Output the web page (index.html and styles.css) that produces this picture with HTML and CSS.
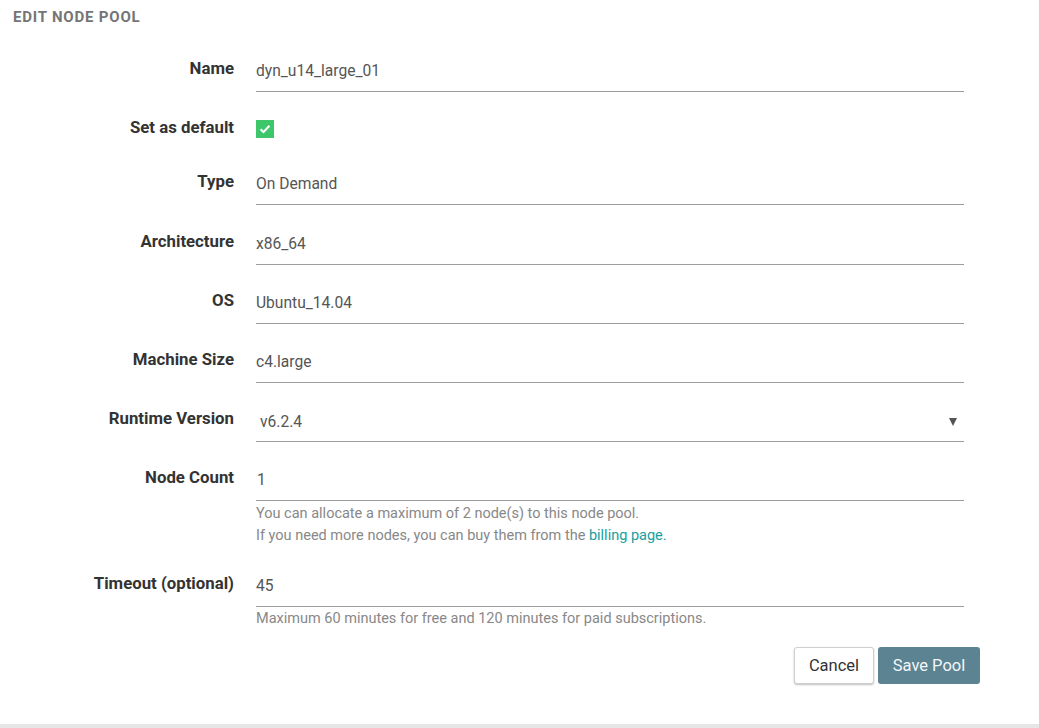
FILE: index.html
```html
<!DOCTYPE html>
<html>
<head>
<meta charset="utf-8">
<link rel="stylesheet" href="styles.css">
</head>
<body>
<div class="panel">
  <h1 class="title">Edit Node Pool</h1>
  <form class="form">
    <label class="label">Name</label>
    <div class="field"><div class="input">dyn_u14_large_01</div></div>

    <label class="label label-check">Set as default</label>
    <div class="field check-row">
      <span class="checkbox"><svg width="12" height="10" viewBox="0 0 12 10"><path d="M1.5 5.2 L4.5 8 L10.5 1.8" fill="none" stroke="#fff" stroke-width="2"/></svg></span>
    </div>

    <label class="label">Type</label>
    <div class="field"><div class="input">On Demand</div></div>

    <label class="label">Architecture</label>
    <div class="field"><div class="input">x86_64</div></div>

    <label class="label">OS</label>
    <div class="field"><div class="input">Ubuntu_14.04</div></div>

    <label class="label">Machine Size</label>
    <div class="field"><div class="input">c4.large</div></div>

    <label class="label">Runtime Version</label>
    <div class="field"><div class="input select"><span class="sel-val">v6.2.4</span><span class="caret"></span></div></div>

    <label class="label">Node Count</label>
    <div class="field">
      <div class="input num">1</div>
      <p class="help">You can allocate a maximum of 2 node(s) to this node pool.<br>If you need more nodes, you can buy them from the <a class="link" href="#">billing page.</a></p>
    </div>

    <label class="label">Timeout (optional)</label>
    <div class="field">
      <div class="input">45</div>
      <p class="help help-last">Maximum 60 minutes for free and 120 minutes for paid subscriptions.</p>
    </div>
  </form>
  <div class="actions">
    <button class="btn btn-cancel" type="button">Cancel</button>
    <button class="btn btn-save" type="button">Save Pool</button>
  </div>
</div>
</body>
</html>
```

FILE: styles.css
```css
html, body {
  margin: 0;
  padding: 0;
  background: #e6e6e6;
}
body {
  font-family: Roboto, "Liberation Sans", sans-serif;
  color: #333;
}
.panel {
  background: #fff;
  height: 724px;
  box-sizing: border-box;
}
.title {
  margin: 0;
  padding: 9px 13px 0;
  font-size: 15px;
  line-height: 16px;
  font-weight: 700;
  text-transform: uppercase;
  color: #757575;
  letter-spacing: 0.8px;
}
.form {
  display: grid;
  grid-template-columns: 234px 708px;
  column-gap: 22px;
  row-gap: 19.2px;
  margin-top: 27px;
  align-items: start;
}
.label {
  text-align: right;
  font-size: 16.8px;
  font-weight: 700;
  line-height: 20px;
  color: #333;
  padding-top: 6px;
}
.field {
  min-width: 0;
}
.input {
  box-sizing: border-box;
  height: 40px;
  padding: 1px 0 1px 0;
  border-bottom: 1px solid #9a9e9e;
  font-size: 15.6px;
  line-height: 37px;
  color: #555;
}
.input.num {
  padding-left: 1px;
}
.select {
  display: flex;
  justify-content: space-between;
  align-items: center;
  padding-left: 4px;
  padding-right: 7px;
  line-height: normal;
}
.caret {
  width: 0;
  height: 0;
  border-left: 4px solid transparent;
  border-right: 4px solid transparent;
  border-top: 8px solid #555;
}
.check-row {
  height: 35px;
  display: flex;
  align-items: center;
}
.checkbox {
  width: 18px;
  height: 18px;
  background: #3ec66a;
  display: flex;
  align-items: center;
  justify-content: center;
}
.help {
  margin: 2px 0 0;
  font-size: 14.5px;
  line-height: 22px;
  color: #888;
}
.help-last {
  margin-top: 1px;
}
.link {
  color: #169e9e;
  text-decoration: none;
}
.actions {
  display: flex;
  justify-content: flex-end;
  gap: 4px;
  width: 980px;
  margin-top: 17px;
}
.btn {
  font-family: Roboto, "Liberation Sans", sans-serif;
  font-size: 16.5px;
  height: 37px;
  border-radius: 3px;
  padding: 0;
  white-space: nowrap;
  cursor: pointer;
}
.btn-cancel {
  width: 80px;
  background: #fff;
  color: #333;
  border: 1px solid #cfcfcf;
  box-shadow: 0 1px 2px rgba(0,0,0,0.25);
}
.btn-save {
  width: 102px;
  background: #5b8391;
  color: #f3f6f7;
  border: none;
}
```
